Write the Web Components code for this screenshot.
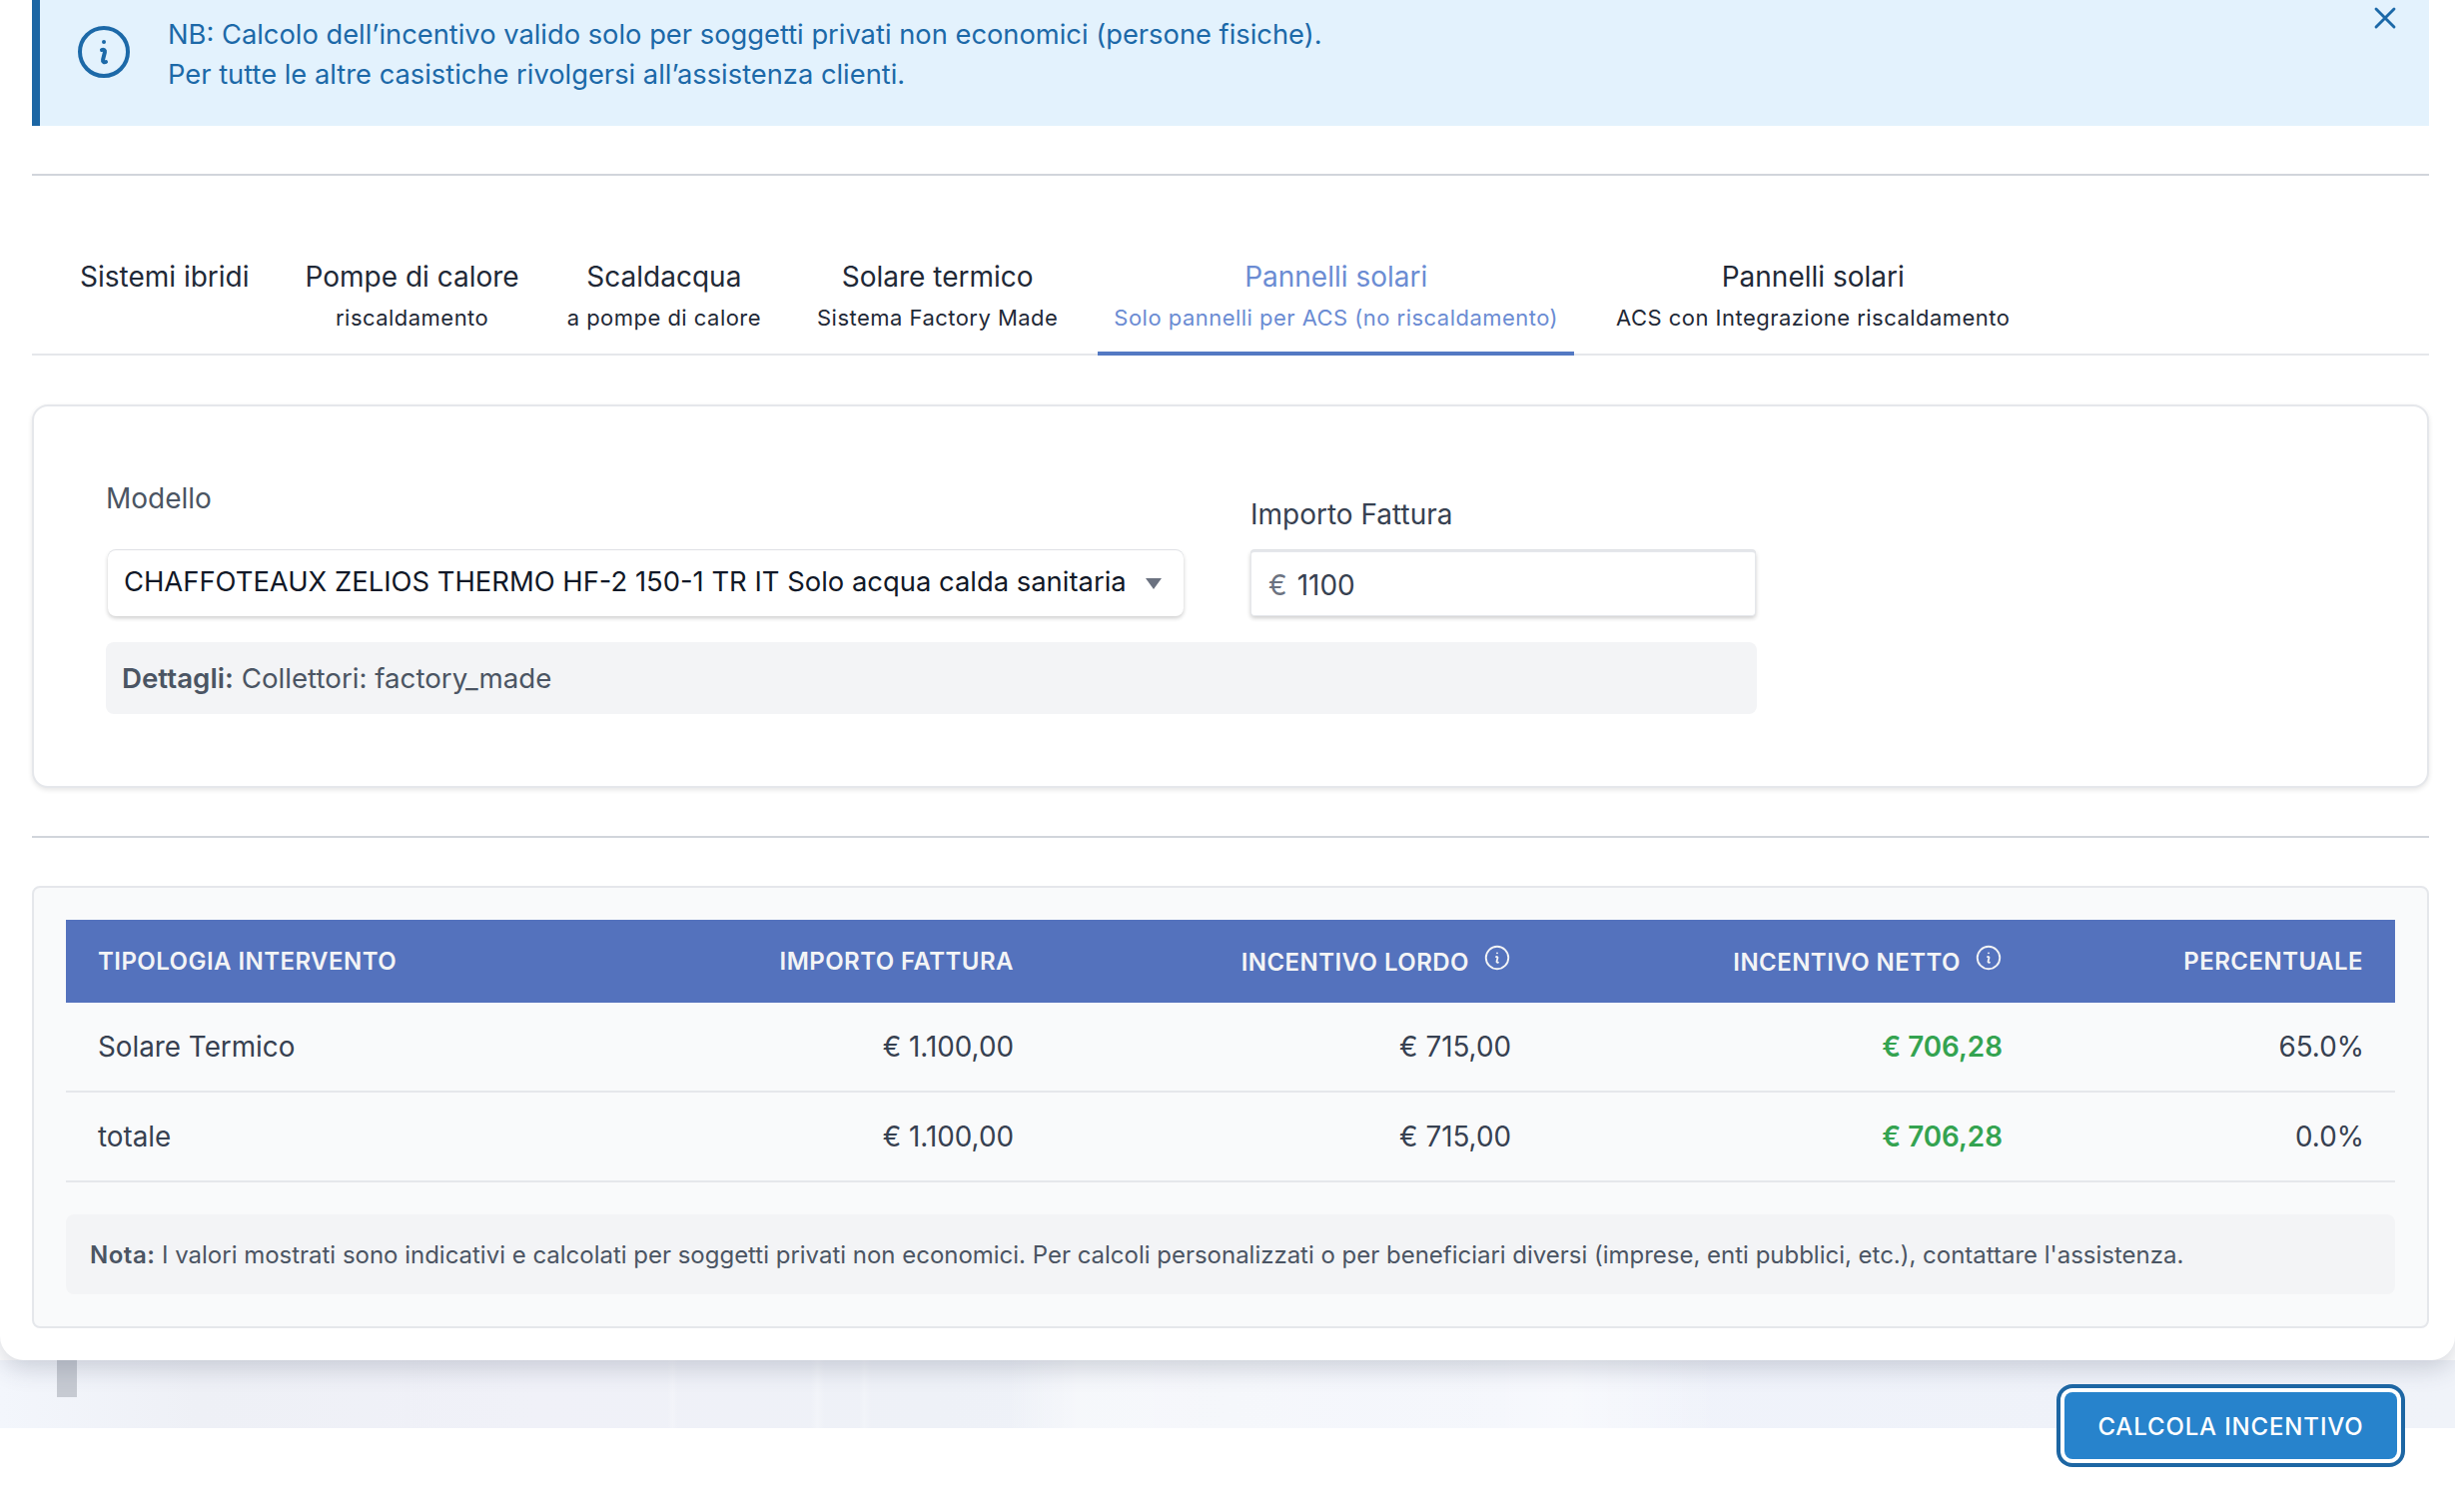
<!DOCTYPE html>
<html lang="it">
<head>
<meta charset="utf-8">
<title>Calcolo incentivo</title>
<style>
html, body { margin: 0; padding: 0; background: #fff; }
body { font-family: Inter, "Liberation Sans", sans-serif; overflow: hidden; }
</style>
</head>
<body>
<incentive-page>
    <info-alert>
        NB: Calcolo dell’incentivo valido solo per soggetti privati non economici (persone fisiche).<br>
        Per tutte le altre casistiche rivolgersi all’assistenza clienti.
    </info-alert>
    <tab-bar>
        <tab-item title="Sistemi ibridi"></tab-item>
        <tab-item title="Pompe di calore" sub="riscaldamento"></tab-item>
        <tab-item style="margin-left:-8px" title="Scaldacqua" sub="a pompe di calore"></tab-item>
        <tab-item title="Solare termico" sub="Sistema Factory Made"></tab-item>
        <tab-item active title="Pannelli solari" sub="Solo pannelli per ACS (no riscaldamento)"></tab-item>
        <tab-item style="margin-left:2px" title="Pannelli solari" sub="ACS con Integrazione riscaldamento"></tab-item>
    </tab-bar>
    <model-form></model-form>
    <result-table></result-table>
</incentive-page>

<script>
const heroInfo = 'm11.25 11.25.041-.02a.75.75 0 0 1 1.063.852l-.708 2.836a.75.75 0 0 0 1.063.853l.041-.021M21 12a9 9 0 1 1-18 0 9 9 0 0 1 18 0Zm-9-3.75h.008v.008H12V8.25Z';

class InfoIcon extends HTMLElement {
    constructor() {
        super();
        const size = this.getAttribute('size') || 24;
        this.attachShadow({mode: 'open'}).innerHTML = `
<style>
:host { display: inline-flex; color: inherit; }
svg { display: block; }
</style>
<svg width="${size}" height="${size}" viewBox="0 0 24 24" fill="none" stroke="currentColor" stroke-width="1.5" stroke-linecap="round" stroke-linejoin="round"><path d="${heroInfo}"/></svg>`;
    }
}
customElements.define('info-icon', InfoIcon);

const pageTemplate = document.createElement('template');
pageTemplate.innerHTML = `
<style>
:host { display: block; position: relative; height: 1514px; overflow: hidden; }
#panel {
    position: relative;
    z-index: 1;
    box-sizing: border-box;
    height: 1362px;
    padding: 0 26px 0 32px;
    background: #fff;
    border-radius: 0 0 24px 24px;
    box-shadow: 0 8px 24px rgba(60, 70, 95, .22);
}
#band {
    position: relative;
    height: 68px;
    background:
        linear-gradient(90deg, transparent 27.2%, rgba(255,255,255,.22) 27.4%, transparent 27.6%, transparent 33%, rgba(255,255,255,.25) 33.3%, transparent 33.6%, transparent 35%, rgba(255,255,255,.22) 35.2%, transparent 35.5%),
        linear-gradient(90deg, transparent 41%, rgba(255,255,255,.45) 44%, rgba(255,255,255,.3) 60%, rgba(255,255,255,.5) 64%, transparent 70%),
        linear-gradient(90deg, #f3f6fc 0%, #eef0f6 8%, #f0f1f8 22%, #eef1f7 38%, #f0f3fb 62%, #eff2f9 85%, #f0f3f9 100%);
}
#bar { width: 20px; height: 37px; margin-left: 57px; background: #c6cad2; }
calc-button { position: absolute; right: 50px; top: 1386px; z-index: 2; }
</style>
<div id="panel"><slot></slot></div>
<div id="band"><div id="bar"></div></div>
<calc-button></calc-button>`;

class IncentivePage extends HTMLElement {
    constructor() {
        super();
        this.attachShadow({mode: 'open'}).appendChild(pageTemplate.content.cloneNode(true));
    }
}
customElements.define('incentive-page', IncentivePage);

const alertTemplate = document.createElement('template');
alertTemplate.innerHTML = `
<style>
:host { display: block; border-bottom: 2px solid #d1d5db; padding-bottom: 48px; }
#box {
    box-sizing: border-box;
    height: 126px;
    display: flex;
    align-items: flex-start;
    padding: 15px 26px 0 32px;
    background: #e3f2fd;
    border-left: 8px solid #1c66a4;
    color: #1c69a8;
    font-size: 27.3px;
    line-height: 40px;
}
info-icon { margin: 5px 32px 0 0; flex: none; }
#text { flex: 1; }
#close { flex: none; margin-top: -15px; color: #1c69a8; }
#close svg { display: block; }
</style>
<div id="box">
    <info-icon size="64"></info-icon>
    <div id="text"><slot></slot></div>
    <div id="close"><svg width="36" height="36" viewBox="0 0 24 24" fill="none" stroke="currentColor" stroke-width="1.9" stroke-linecap="round" stroke-linejoin="round"><path d="M6 18 18 6M6 6l12 12"/></svg></div>
</div>`;

class InfoAlert extends HTMLElement {
    constructor() {
        super();
        this.attachShadow({mode: 'open'}).appendChild(alertTemplate.content.cloneNode(true));
    }
}
customElements.define('info-alert', InfoAlert);

const tabBarTemplate = document.createElement('template');
tabBarTemplate.innerHTML = `
<style>
:host { display: block; margin-top: 64px; border-bottom: 2px solid #e5e7eb; }
#tabs { display: flex; gap: 24px; padding-left: 32px; margin-bottom: -2px; }
</style>
<div id="tabs"><slot></slot></div>`;

class TabBar extends HTMLElement {
    constructor() {
        super();
        this.attachShadow({mode: 'open'}).appendChild(tabBarTemplate.content.cloneNode(true));
    }
}
customElements.define('tab-bar', TabBar);

class TabItem extends HTMLElement {
    constructor() {
        super();
        const sub = this.getAttribute('sub');
        this.attachShadow({mode: 'open'}).innerHTML = `
<style>
:host { display: block; box-sizing: border-box; height: 116px; padding: 17px 16px 0; text-align: center; color: #1f2937; border-bottom: 4px solid transparent; }
:host([active]) { color: #6b8cd3; border-bottom-color: #5379c3; }
.title { font-size: 28px; line-height: 40px; }
.sub { font-size: 22px; letter-spacing: .47px; line-height: 36px; margin-top: 3px; white-space: nowrap; }
</style>
<div class="title">${this.getAttribute('title')}</div>
${sub ? `<div class="sub">${sub}</div>` : ''}`;
    }
}
customElements.define('tab-item', TabItem);

const formTemplate = document.createElement('template');
formTemplate.innerHTML = `
<style>
:host {
    display: block;
    margin-top: 49px;
    padding-bottom: 48px;
    border-bottom: 2px solid #d1d5db;
}
#card {
    box-sizing: border-box;
    height: 384px;
    padding: 72px 72px;
    background: #fff;
    border: 2px solid #e5e7eb;
    border-radius: 16px;
    box-shadow: 0 2px 5px rgba(0, 0, 0, .1);
}
#form { width: 1653px; }
#fields { display: flex; align-items: flex-end; gap: 67px; }
.field { display: flex; flex-direction: column; }
label { font-size: 28px; line-height: 40px; color: #4b5563; }
#model { width: 1079px; }
#model label { margin-bottom: 32px; }
#amount { width: 506px; }
#amount label { margin-bottom: 16px; color: #374151; }
.control {
    box-sizing: border-box;
    height: 66px;
    background: #fff;
    box-shadow: 0 2px 4px rgba(0,0,0,.2), 0 -1px 0 #e5e7eb;
    display: flex;
    align-items: center;
}
#select { margin-left: 2px; padding: 0 16px; border-radius: 8px; color: #111827; font-size: 27.4px; justify-content: space-between; }
#select span { white-space: nowrap; position: relative; top: -2px; }
#arrow { width: 0; height: 0; border-left: 8px solid transparent; border-right: 8px solid transparent; border-top: 11px solid #6b7280; margin-right: 6px; }
#input { padding: 2px 16px 0 17px; border: 1px solid #e5e7eb; border-top-width: 2px; border-radius: 4px; font-size: 28px; color: #374151; gap: 10px; }
#input span:first-child { color: #6b7280; }
#details {
    margin-top: 26px;
    height: 72px;
    box-sizing: border-box;
    padding: 0 16px;
    display: flex;
    align-items: center;
    background: #f3f4f6;
    border-radius: 8px;
    font-size: 27.7px;
    color: #4b5563;
}
#details b { font-weight: 600; margin-right: 8px; }
</style>
<div id="card">
    <div id="form">
        <div id="fields">
            <div class="field" id="model">
                <label>Modello</label>
                <div class="control" id="select">
                    <span>CHAFFOTEAUX ZELIOS THERMO HF-2 150-1 TR IT Solo acqua calda sanitaria</span>
                    <div id="arrow"></div>
                </div>
            </div>
            <div class="field" id="amount">
                <label>Importo Fattura</label>
                <div class="control" id="input"><span>€</span><span>1100</span></div>
            </div>
        </div>
        <div id="details"><b>Dettagli:</b> Collettori: factory_made</div>
    </div>
</div>`;

class ModelForm extends HTMLElement {
    constructor() {
        super();
        this.attachShadow({mode: 'open'}).appendChild(formTemplate.content.cloneNode(true));
    }
}
customElements.define('model-form', ModelForm);

const tableTemplate = document.createElement('template');
tableTemplate.innerHTML = `
<style>
:host {
    display: block;
    box-sizing: border-box;
    margin-top: 48px;
    height: 443px;
    padding: 32px 32px 0;
    background: #f9fafb;
    border: 2px solid #e5e7eb;
    border-radius: 8px;
}
table { width: 2332px; table-layout: fixed; border-collapse: collapse; }
th {
    height: 83px;
    padding: 0 32px;
    background: #5472bd;
    color: #f3f4f6;
    font-size: 24px;
    font-weight: 600;
    letter-spacing: .45px;
    text-align: right;
    text-transform: uppercase;
}
th:first-child, td:first-child { text-align: left; }
th > span { display: inline-flex; align-items: center; gap: 13px; position: relative; top: 1px; }
th info-icon { position: relative; top: -5px; margin-right: -1px; }
td {
    height: 88px;
    padding: 0 32px;
    border-bottom: 2px solid #e5e7eb;
    color: #374151;
    font-size: 27.8px;
    text-align: right;
}
td:last-child { padding-right: 31px; }
td.green { color: #34a350; font-weight: 600; }
#note {
    margin-top: 32px;
    height: 80px;
    box-sizing: border-box;
    padding: 0 24px;
    display: flex;
    align-items: center;
    background: #f3f4f6;
    border-radius: 8px;
    font-size: 24px;
    letter-spacing: -.015px;
    color: #4b5563;
    white-space: pre;
}
#note b { font-weight: 600; letter-spacing: .5px; }
</style>
<table>
    <colgroup><col style="width:500px"><col style="width:481px"><col style="width:498px"><col style="width:492px"><col style="width:361px"></colgroup>
    <thead>
        <tr>
            <th>Tipologia Intervento</th>
            <th>Importo Fattura</th>
            <th><span>Incentivo Lordo <info-icon size="30"></info-icon></span></th>
            <th><span>Incentivo Netto <info-icon size="30"></info-icon></span></th>
            <th>Percentuale</th>
        </tr>
    </thead>
    <tbody>
        <tr><td>Solare Termico</td><td>€ 1.100,00</td><td>€ 715,00</td><td class="green">€ 706,28</td><td>65.0%</td></tr>
        <tr><td>totale</td><td>€ 1.100,00</td><td>€ 715,00</td><td class="green">€ 706,28</td><td>0.0%</td></tr>
    </tbody>
</table>
<div id="note"><b>Nota:</b> I valori mostrati sono indicativi e calcolati per soggetti privati non economici. Per calcoli personalizzati o per beneficiari diversi (imprese, enti pubblici, etc.), contattare l'assistenza.</div>`;

class ResultTable extends HTMLElement {
    constructor() {
        super();
        this.attachShadow({mode: 'open'}).appendChild(tableTemplate.content.cloneNode(true));
    }
}
customElements.define('result-table', ResultTable);

class CalcButton extends HTMLElement {
    constructor() {
        super();
        this.attachShadow({mode: 'open'}).innerHTML = `
<style>
:host { display: block; box-sizing: border-box; width: 349px; height: 83px; padding: 4px; border-radius: 16px; background: #1d66a3; }
#ring { box-sizing: border-box; height: 100%; padding: 4px; border-radius: 12px; background: #fff; }
button {
    display: flex; align-items: center; justify-content: center;
    width: 100%; height: 100%; padding: 2px 0 0; border: 0; border-radius: 8px;
    background: #2783cc; color: #fff;
    font: 500 24px Inter, "Liberation Sans", sans-serif; letter-spacing: .85px;
}
</style>
<div id="ring"><button>CALCOLA INCENTIVO</button></div>`;
    }
}
customElements.define('calc-button', CalcButton);
</script>
</body>
</html>
